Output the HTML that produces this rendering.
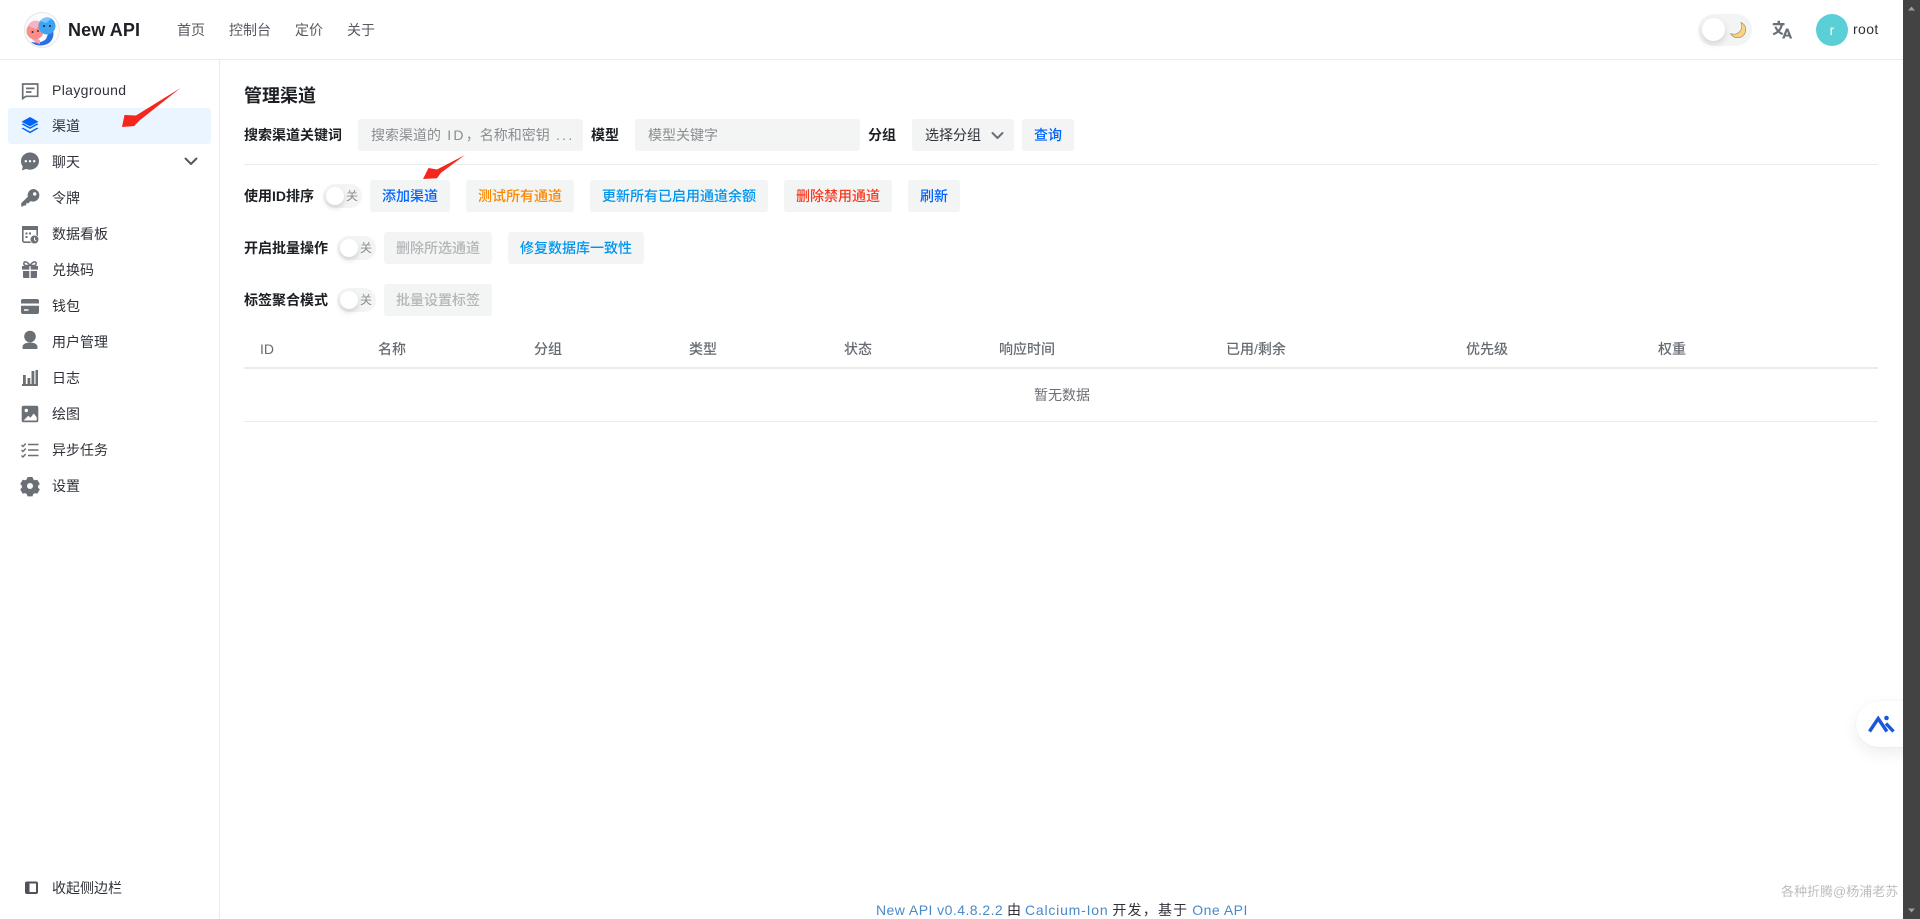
<!DOCTYPE html>
<html lang="zh">
<head>
<meta charset="utf-8">
<title>New API</title>
<style>
html,body{margin:0;padding:0;width:1920px;height:919px;overflow:hidden;background:#fff;}
body{font-family:"Liberation Sans","Noto Sans CJK SC",sans-serif;font-size:14px;color:#1c1f23;position:relative;}
.t{position:absolute;white-space:nowrap;line-height:20px;}
.b{font-weight:600;}
.nav{color:#55595f;}
.side{color:#2e3238;}
.box{position:absolute;background:#f3f4f4;border-radius:3px;}
.btn{position:absolute;background:#f3f4f4;border-radius:3px;height:32px;line-height:32px;text-align:center;font-weight:500;white-space:nowrap;}
.ph{color:#8a8d91;}
.sw{position:absolute;width:39px;height:24px;border-radius:12px;background:#f3f4f4;}
.sw i{position:absolute;left:3px;top:3px;width:18px;height:18px;border-radius:50%;background:#fff;box-shadow:0 3px 6px rgba(0,0,0,.15);}
.sw span{position:absolute;left:23px;top:0;line-height:24px;font-size:12px;color:#8a8c90;}
.line{position:absolute;background:#eaebeb;}
.th{color:#666b72;font-weight:500;}
.lk{color:#4a89c8;}
svg{position:absolute;left:0;top:0;}
</style>
</head>
<body>
<div class="line" style="left:0;top:59px;width:1903px;height:1px"></div>
<div class="line" style="left:219px;top:60px;width:1px;height:859px"></div>

<div class="box" style="left:8px;top:108px;width:203px;height:36px;background:#eaf5ff"></div>

<div class="t" style="left:68px;top:20px;font-size:18px;font-weight:600;color:#1c1f23;letter-spacing:.1px">New API</div>
<div class="t nav" style="left:177px;top:20px">首页</div>
<div class="t nav" style="left:229px;top:20px">控制台</div>
<div class="t nav" style="left:295px;top:20px">定价</div>
<div class="t nav" style="left:347px;top:20px">关于</div>

<div class="t side" style="left:52px;top:80px;letter-spacing:.36px">Playground</div>
<div class="t side" style="left:52px;top:116px">渠道</div>
<div class="t side" style="left:52px;top:152px">聊天</div>
<div class="t side" style="left:52px;top:188px">令牌</div>
<div class="t side" style="left:52px;top:224px">数据看板</div>
<div class="t side" style="left:52px;top:260px">兑换码</div>
<div class="t side" style="left:52px;top:296px">钱包</div>
<div class="t side" style="left:52px;top:332px">用户管理</div>
<div class="t side" style="left:52px;top:368px">日志</div>
<div class="t side" style="left:52px;top:404px">绘图</div>
<div class="t side" style="left:52px;top:440px">异步任务</div>
<div class="t side" style="left:52px;top:476px">设置</div>
<div class="t side" style="left:52px;top:878px">收起侧边栏</div>

<div class="t" style="left:244px;top:86px;font-size:18px;line-height:20px;font-weight:600">管理渠道</div>

<div class="t b" style="left:244px;top:125px">搜索渠道关键词</div>
<div class="box" style="left:358px;top:119px;width:225px;height:32px"></div>
<div class="t ph" style="left:371px;top:125px">搜索渠道的<span style="letter-spacing:2.3px"> ID</span>，名称和密钥<span style="letter-spacing:2.3px"> ...</span></div>
<div class="t b" style="left:591px;top:125px">模型</div>
<div class="box" style="left:635px;top:119px;width:225px;height:32px"></div>
<div class="t ph" style="left:648px;top:125px">模型关键字</div>
<div class="t b" style="left:868px;top:125px">分组</div>
<div class="box" style="left:912px;top:119px;width:102px;height:32px"></div>
<div class="t" style="left:925px;top:125px;color:#2e3238">选择分组</div>
<div class="btn" style="left:1022px;top:119px;width:52px;color:#0064fa">查询</div>

<div class="line" style="left:244px;top:164px;width:1634px;height:1px"></div>

<div class="t b" style="left:244px;top:186px">使用ID排序</div>
<div class="sw" style="left:323px;top:184px"><i></i><span>关</span></div>
<div class="btn" style="left:370px;top:180px;width:80px;color:#0064fa">添加渠道</div>
<div class="btn" style="left:466px;top:180px;width:108px;color:#fc8800">测试所有通道</div>
<div class="btn" style="left:590px;top:180px;width:178px;color:#0095ee">更新所有已启用通道余额</div>
<div class="btn" style="left:784px;top:180px;width:108px;color:#f93920">删除禁用通道</div>
<div class="btn" style="left:908px;top:180px;width:52px;color:#0064fa">刷新</div>

<div class="t b" style="left:244px;top:238px">开启批量操作</div>
<div class="sw" style="left:337px;top:236px"><i></i><span>关</span></div>
<div class="btn" style="left:384px;top:232px;width:108px;color:#b3b5b7">删除所选通道</div>
<div class="btn" style="left:508px;top:232px;width:136px;color:#0095ee">修复数据库一致性</div>

<div class="t b" style="left:244px;top:290px">标签聚合模式</div>
<div class="sw" style="left:337px;top:288px"><i></i><span>关</span></div>
<div class="btn" style="left:384px;top:284px;width:108px;color:#b3b5b7">批量设置标签</div>

<div class="t th" style="left:260px;top:339px">ID</div>
<div class="t th" style="left:378px;top:339px">名称</div>
<div class="t th" style="left:534px;top:339px">分组</div>
<div class="t th" style="left:689px;top:339px">类型</div>
<div class="t th" style="left:844px;top:339px">状态</div>
<div class="t th" style="left:999px;top:339px">响应时间</div>
<div class="t th" style="left:1226px;top:339px">已用/剩余</div>
<div class="t th" style="left:1466px;top:339px">优先级</div>
<div class="t th" style="left:1658px;top:339px">权重</div>
<div class="line" style="left:244px;top:367px;width:1634px;height:2px"></div>
<div class="t" style="left:1034px;top:385px;color:#6b6f75">暂无数据</div>
<div class="line" style="left:244px;top:421px;width:1634px;height:1px"></div>

<div class="box" style="left:1698px;top:14px;width:54px;height:32px;border-radius:16px"></div>
<div style="position:absolute;left:1702px;top:18px;width:23px;height:23px;border-radius:50%;background:#fff;box-shadow:0 3px 7px rgba(0,0,0,.14)"></div>
<div style="position:absolute;left:1816px;top:14px;width:32px;height:32px;border-radius:50%;background:#5bcfd6;color:#fff;text-align:center;line-height:32px;font-size:14px;font-weight:500">r</div>
<div class="t" style="left:1853px;top:19px;color:#2e3238;letter-spacing:.4px">root</div>

<div style="position:absolute;left:1856px;top:701px;width:60px;height:46px;border-radius:23px 0 0 23px;background:#fff;box-shadow:0 6px 16px rgba(0,0,0,.07),0 0 1px rgba(0,0,0,.1)"></div>

<div class="t" style="left:1781px;top:882px;color:#bcbcbc;font-size:13px">各种折腾@杨浦老苏</div>

<div class="t" style="left:876px;top:900px;color:#2e3238"><span class="lk" style="letter-spacing:.45px">New API v0.4.8.2.2</span> 由 <span class="lk" style="letter-spacing:.8px">Calcium-Ion</span> <span style="letter-spacing:1.2px">开发，基于</span> <span class="lk" style="letter-spacing:.5px">One API</span></div>

<div style="position:absolute;left:1903px;top:0;width:17px;height:919px;background:#434343"></div>

<svg width="1920" height="919" viewBox="0 0 1920 919">
  <!-- logo -->
  <circle cx="42" cy="30" r="17.5" fill="#fbfbfc" stroke="#e6e6ea" stroke-width="1"/>
  <path d="M51 27c4 5 3 12-2 16c-6 4-14 3-18-1c5 1 11 1 15-3z" fill="#2b6fe0"/>
  <path d="M40 44c-5-1-8-4-9-8l9 4z" fill="#f2a0b6"/>
  <circle cx="35" cy="31" r="8.5" fill="#f98d8a"/>
  <path d="M28 26c2-6 10-7 14-3l-6 6z" fill="#f7b2c4"/>
  <circle cx="47" cy="26" r="8.5" fill="#3ea3f2"/>
  <path d="M40 21c2-3 7-4 11-2l-5 4z" fill="#7cc8f7"/>
  <circle cx="32.500" cy="32" r="1" fill="#333"/><circle cx="38" cy="31" r="1" fill="#333"/>
  <circle cx="44" cy="26" r="1" fill="#123"/><circle cx="50" cy="26" r="1" fill="#123"/>

  <!-- playground -->
  <g fill="none" stroke="#6b6f76" stroke-width="1.7">
    <path d="M22.7 84h15v12.3H26l-3.3 2.2z"/>
    <path d="M26 88.4h8.5M26 92h5.5"/>
  </g>
  <!-- layers -->
  <g fill="#0064fa">
    <path d="M30 117l8.5 4.7L30 126.4l-8.5-4.7z"/>
    <path d="M21.5 124.2l1.5-.8 7 3.9 7-3.9 1.5.8L30 129z"/>
    <path d="M21.5 128.4l1.5-.8 7 3.9 7-3.9 1.5.8L30 133.2z"/>
  </g>
  <!-- chat -->
  <path d="M30 152.5c5 0 9 3.8 9 8.6s-4 8.6-9 8.6c-1.3 0-2.6-.3-3.8-.7l-4.4 1.4 1-3.8c-1.2-1.5-1.8-3.4-1.8-5.5 0-4.8 4-8.6 9-8.6z" fill="#6b6f76"/>
  <circle cx="25.8" cy="161.2" r="1.2" fill="#fff"/><circle cx="30" cy="161.2" r="1.2" fill="#fff"/><circle cx="34.2" cy="161.2" r="1.2" fill="#fff"/>
  <!-- key -->
  <path fill-rule="evenodd" d="M33 189a6.3 6.3 0 1 1-2.4 12.1l-2.2 2.2h-2.2v2.2h-2.4l-1 1h-1.6v-3.2l6.6-6.6A6.3 6.3 0 0 1 33 189zm1.7 3.3a1.7 1.7 0 1 0 0 3.4 1.7 1.7 0 0 0 0-3.4z" fill="#6b6f76"/>
  <!-- data -->
  <rect x="22.800" y="226.800" width="14.400" height="15.400" rx="1.600" fill="none" stroke="#6b6f76" stroke-width="1.600"/>
  <rect x="22" y="226" width="16" height="4" fill="#6b6f76"/>
  <circle cx="34.5" cy="239.5" r="4.4" fill="#6b6f76" stroke="#fff" stroke-width=".8"/>
  <path d="M34.5 237.5v2.3l1.6 1" stroke="#fff" stroke-width="1" fill="none"/>
  <rect x="25.5" y="232.500" width="2" height="2" fill="#6b6f76"/><rect x="29" y="232.500" width="2" height="2" fill="#6b6f76"/><rect x="25.5" y="236" width="2" height="2" fill="#6b6f76"/>
  <!-- gift -->
  <g fill="#6b6f76">
    <rect x="22" y="266" width="7.3" height="3.6"/><rect x="30.7" y="266" width="7.3" height="3.6"/>
    <path d="M23 271h6.3v7H24a1 1 0 0 1-1-1zM30.7 271H37v6a1 1 0 0 1-1 1h-5.3z"/>
  </g>
  <g fill="none" stroke="#6b6f76" stroke-width="1.5">
    <path d="M30 265.5c-2-3-3.5-4-5-3.6-1.6.5-1.6 3 .3 3.6zM30 265.5c2-3 3.5-4 5-3.6 1.6.5 1.6 3-.3 3.6z"/>
  </g>
  <!-- wallet -->
  <path fill-rule="evenodd" d="M23 299h14a2 2 0 0 1 2 2v2.5H21V301a2 2 0 0 1 2-2zm-2 6.7h18V312a2 2 0 0 1-2 2H23a2 2 0 0 1-2-2zm3 3.6v1.5h4.5v-1.5z" fill="#6b6f76"/>
  <!-- user -->
  <circle cx="30" cy="336.5" r="5.8" fill="#6b6f76"/>
  <path d="M22.5 348v-1c0-2.600 3-4.500 7.500-4.500s7.500 1.900 7.500 4.500v1c0 .6-.4 1-1 1h-13c-.6 0-1-.4-1-1z" fill="#6b6f76"/>
  <!-- log -->
  <g fill="#6b6f76">
    <rect x="22" y="384" width="16" height="2"/>
    <rect x="23" y="375" width="2.800" height="9"/>
    <rect x="27.500" y="378" width="2.800" height="6"/>
    <rect x="31.500" y="371" width="2.800" height="13"/>
    <rect x="35.500" y="370" width="2.500" height="14"/>
  </g>
  <!-- image -->
  <rect x="21.700" y="405.700" width="16.600" height="16.600" rx="1.800" fill="#6b6f76"/>
  <circle cx="26.300" cy="410.500" r="1.700" fill="#fff"/>
  <path d="M23.500 420.500l4.800-4.800 2.200 2 3.200-4.200 3 3.800v3.200z" fill="#fff"/>
  <!-- tasks -->
  <g fill="none" stroke="#6b6f76" stroke-width="1.400">
    <path d="M21.500 445l1.500 1.500 2.700-3M21.500 450l1.500 1.500 2.700-3M21.500 455.500l1.500 1.500 2.700-3"/>
    <path d="M28 444.500h10.500M28 450h10.500M28 455.500h10.500" stroke-width="1.600"/>
  </g>
  <!-- gear -->
  <path fill-rule="evenodd" d="M27.500 477h5l.7 2.300 1.700 1 2.400-.6 2.500 4.300-1.700 1.700v2l1.700 1.700-2.500 4.300-2.400-.6-1.700 1-.7 2.300h-5l-.7-2.300-1.700-1-2.400.6-2.500-4.300 1.700-1.700v-2l-1.700-1.700 2.500-4.300 2.400.6 1.700-1zm2.500 6a3 3 0 1 0 0 6 3 3 0 0 0 0-6z" fill="#6b6f76"/>
  <!-- collapse -->
  <rect x="25" y="881.500" width="13" height="12.500" rx="2" fill="#4f5257"/>
  <rect x="29.500" y="883.500" width="6.500" height="8.500" fill="#fff"/>

  <!-- chevrons -->
  <path d="M185.500 158.500l5.500 5.500 5.500-5.500" fill="none" stroke="#55595f" stroke-width="2" stroke-linecap="round" stroke-linejoin="round"/>
  <path d="M992.500 133l5 5 5-5" fill="none" stroke="#6b6f76" stroke-width="2" stroke-linecap="round" stroke-linejoin="round"/>

  <!-- moon -->
  <path d="M1741 22.500c3.500 1.500 5.300 5 4.600 8.700-.8 4-4.300 6.700-8.300 6.500-3-.1-5.400-1.700-6.700-4 3.800 1.200 7.500.3 9.600-2.600 1.800-2.600 2-5.600.8-8.600z" fill="#ffd27d" stroke="#8a8474" stroke-width=".6"/>

  <!-- translate -->
  <g fill="#6b6f76">
    <path d="M1773 23h4.500v-2.300h2.500V23h4.500v2.200h-1.600c-.6 2.300-1.600 4.300-3 6 1 .8 2.100 1.400 3.300 1.900l-.9 2c-1.500-.6-2.800-1.400-4-2.500-1.300 1.100-2.900 2-4.700 2.600l-.9-2c1.600-.5 3-1.200 4.100-2.100-1.100-1.300-1.900-2.800-2.500-4.500h2.300c.4 1.200 1 2.200 1.700 3 1-1.200 1.700-2.700 2.200-4.400h-8z"/>
    <path fill-rule="evenodd" d="M1786 28.500h2.300l3.900 10h-2.500l-.7-2h-3.700l-.7 2h-2.500zm1.150 2.900l-1.100 3.200h2.200z"/>
  </g>

  <!-- floating AI -->
  <g fill="none" stroke="#1a56db" stroke-width="3.400">
    <path d="M1869.500 731.500l8.700-13 8.700 13"/>
    <path d="M1886 723.500l7.500 8"/>
  </g>
  <circle cx="1886.500" cy="718" r="2.300" fill="#1a56db"/>

  <!-- red arrows -->
  <path d="M180.500 88L136 115.500l-11.500-.5-2.500 12 13-1-.5-.5 5-5z" fill="#f5261b"/>
  <path d="M465 155l-28 14.500-8.500-1.500-5.500 11 14-.8 4-5.500z" fill="#f5261b"/>

  <!-- scrollbar arrows -->
  <path d="M1908 10.500l3.500-4 3.500 4z" fill="#9c9c9c"/>
  <path d="M1908 908.500l3.500 4 3.500-4z" fill="#9c9c9c"/>
</svg>
</body>
</html>
